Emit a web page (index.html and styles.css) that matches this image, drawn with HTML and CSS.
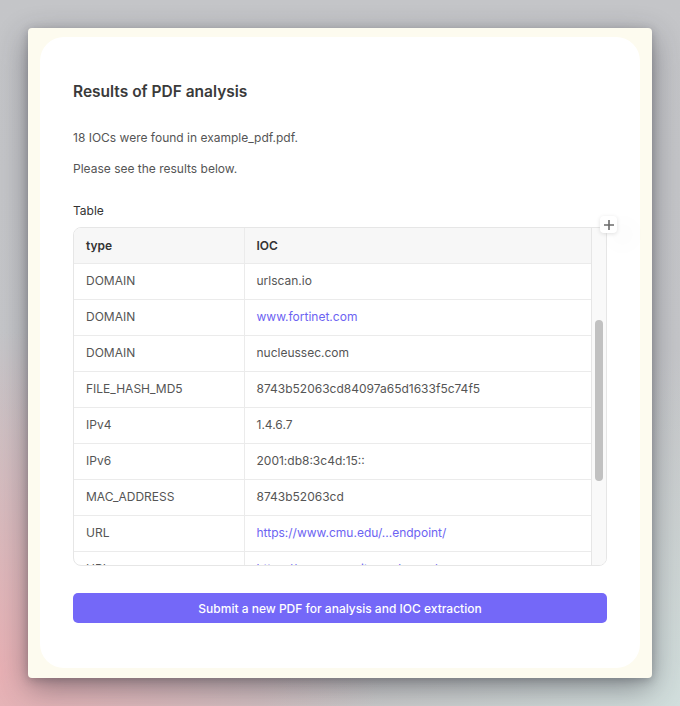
FILE: index.html
```html
<!DOCTYPE html>
<html>
<head>
<meta charset="utf-8">
<link rel="stylesheet" href="styles.css">
</head>
<body>
<div class="window">
  <div class="card">
    <h2 class="title">Results of PDF analysis</h2>
    <p class="text first">18 IOCs were found in example_pdf.pdf.</p>
    <p class="text second">Please see the results below.</p>
    <div class="label">Table</div>
    <div class="table-block">
      <button class="add-btn" aria-label="add">
        <svg width="12" height="12" viewBox="0 0 12 12"><path d="M6 1v10M1 6h10" stroke="#6b6b6b" stroke-width="1.6" fill="none"/></svg>
      </button>
      <div class="table-frame">
        <div class="table-view">
          <table class="data">
            <thead>
              <tr><th class="c1">type</th><th>IOC</th></tr>
            </thead>
            <tbody>
              <tr><td class="c1">DOMAIN</td><td>urlscan.io</td></tr>
              <tr><td class="c1">DOMAIN</td><td><a class="link">www.fortinet.com</a></td></tr>
              <tr><td class="c1">DOMAIN</td><td>nucleussec.com</td></tr>
              <tr><td class="c1">FILE_HASH_MD5</td><td>8743b52063cd84097a65d1633f5c74f5</td></tr>
              <tr><td class="c1">IPv4</td><td>1.4.6.7</td></tr>
              <tr><td class="c1">IPv6</td><td>2001:db8:3c4d:15::</td></tr>
              <tr><td class="c1">MAC_ADDRESS</td><td>8743b52063cd</td></tr>
              <tr><td class="c1">URL</td><td><a class="link">https://www.cmu.edu/...endpoint/</a></td></tr>
              <tr><td class="c1">URL</td><td><a class="link">https://www.securityweek.com/...</a></td></tr>
            </tbody>
          </table>
        </div>
        <div class="track"><div class="thumb"></div></div>
      </div>
    </div>
    <button class="submit">Submit a new PDF for analysis and IOC extraction</button>
  </div>
</div>
</body>
</html>
```

FILE: styles.css
```css
html, body {
  margin: 0;
  padding: 0;
}
body {
  width: 680px;
  height: 706px;
  overflow: hidden;
  font-family: Inter, "Noto Sans", "Liberation Sans", sans-serif;
  background:
    radial-gradient(ellipse 380px 340px at 0% 95%, rgba(234,176,180,0.95), rgba(234,176,180,0) 100%),
    radial-gradient(ellipse 420px 360px at 100% 100%, rgba(210,224,222,0.95), rgba(210,224,222,0) 100%),
    linear-gradient(180deg, #c4c5c8 0%, #c6c7ca 50%, #c9c5c6 100%);
}
.window {
  box-sizing: border-box;
  margin: 28px 0 0 28px;
  width: 624px;
  height: 650px;
  background: #fdfbef;
  border-radius: 4px;
  padding: 9px 12px 10px 12px;
  display: flex;
  flex-direction: column;
  box-shadow: 0 10px 30px rgba(40,40,50,0.45), 0 2px 8px rgba(40,40,50,0.25);
}
.card {
  flex: 1;
  background: #ffffff;
  border-radius: 24px;
  padding: 45px 33px 0 33px;
  display: flex;
  flex-direction: column;
}
.title {
  margin: 0;
  font-size: 15.5px;
  line-height: 20px;
  font-weight: 600;
  color: #3a3a3a;
}
.text {
  margin: 0;
  font-size: 12px;
  line-height: 18px;
  color: #555555;
}
.first { margin-top: 27px; }
.second { margin-top: 13px; }
.label {
  margin-top: 24px;
  font-size: 12px;
  line-height: 18px;
  color: #333333;
}
.table-block {
  position: relative;
  margin-top: 7px;
}
.add-btn {
  position: absolute;
  top: -11px;
  right: -10px;
  width: 17px;
  height: 17px;
  padding: 0;
  border: none;
  border-radius: 4px;
  background: #ffffff;
  display: flex;
  align-items: center;
  justify-content: center;
  box-shadow: 0 1px 4px rgba(0,0,0,0.12), 14px 10px 24px rgba(0,0,0,0.04);
  z-index: 2;
}
.table-frame {
  box-sizing: border-box;
  height: 339px;
  border: 1px solid #e6e6e6;
  border-radius: 8px;
  overflow: hidden;
  display: grid;
  grid-template-columns: 1fr 15px;
}
.table-view {
  overflow: hidden;
}
.data {
  width: 100%;
  border-collapse: collapse;
  font-size: 12px;
  color: #555555;
}
.data th, .data td {
  height: 36px;
  box-sizing: border-box;
  padding: 0 12px 2px 12px;
  text-align: left;
  border-bottom: 1px solid #ebebeb;
}
.data th {
  height: 35px;
  padding-bottom: 0;
  background: #f7f7f7;
  font-weight: 600;
  color: #333333;
}
.data .c1 {
  width: 170px;
  box-sizing: border-box;
  border-right: 1px solid #ebebeb;
}
.link {
  color: #6c63f2;
  text-decoration: none;
}
.track {
  background: #f9f9f9;
  border-left: 1px solid #e6e6e6;
  padding-top: 92px;
  display: flex;
  justify-content: center;
}
.thumb {
  width: 8px;
  height: 161px;
  border-radius: 4px;
  background: #c1c1c1;
}
.submit {
  margin-top: 27px;
  height: 30px;
  border: none;
  border-radius: 5px;
  background: #7468f8;
  color: #ffffff;
  font-family: Inter, "Noto Sans", "Liberation Sans", sans-serif;
  font-size: 12px;
  font-weight: 500;
}
```
